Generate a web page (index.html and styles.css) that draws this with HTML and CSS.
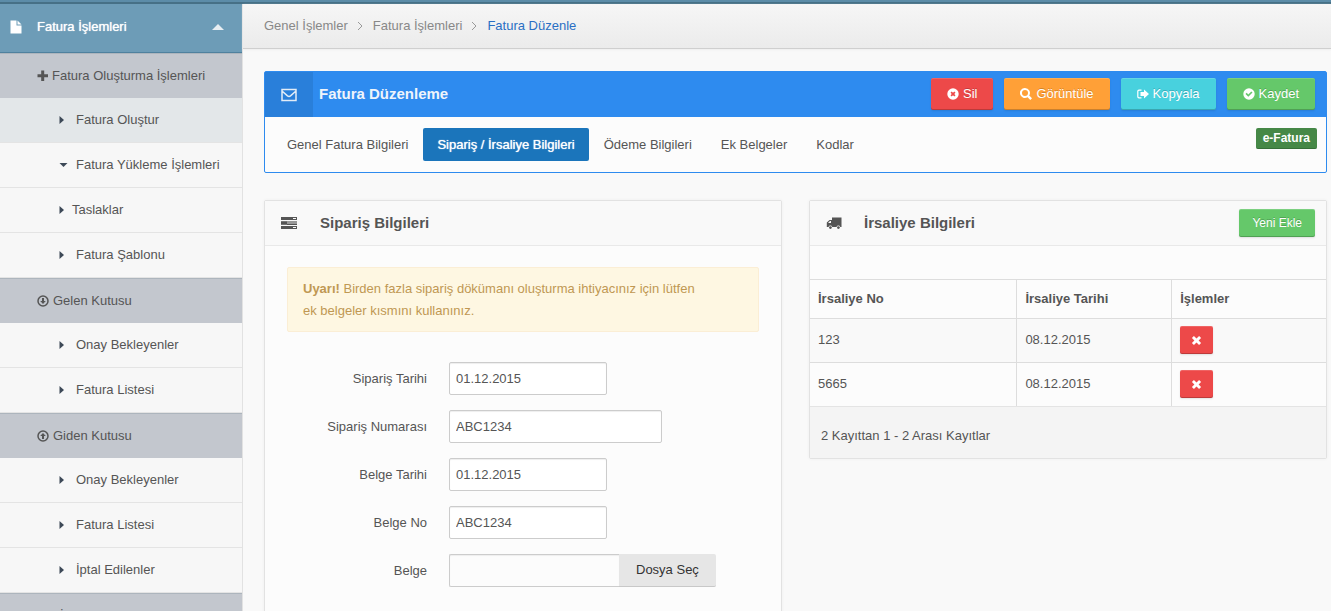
FILE: index.html
```html
<!DOCTYPE html>
<html lang="tr">
<head>
<meta charset="utf-8">
<title>Fatura Düzenle</title>
<link rel="stylesheet" href="styles.css">
</head>
<body>
<svg class="sprite" aria-hidden="true">
  <symbol id="right" viewBox="0 0 12 12"><path d="M1.500 2 6 6 1.500 10z"/></symbol>
  <symbol id="times" viewBox="0 0 12 12"><path d="M3.200 1 6 3.700 8.800 1 11 3.200 8.300 6 11 8.800 8.800 11 6 8.300 3.200 11 1 8.800 3.700 6 1 3.200z"/></symbol>
</svg>
<div class="topbar"></div>
<div class="layout">
  <nav class="sidebar">
    <a class="side-title" href="#">
      <svg class="icon" viewBox="0 0 12 14"><path d="M.5.5h6v5h5v8H.5z"/><path d="M7.500.5 11.500 4.500h-4z"/></svg>
      <span>Fatura İşlemleri</span>
      <svg class="caret" viewBox="0 0 12 6"><path d="M6 0 12 6H0z"/></svg>
    </a>
    <a class="side-head first" href="#"><svg class="icon" viewBox="0 0 12 12"><path d="M4.200.5h3v3.700H11v3H7.200V11h-3V7.200H.5v-3h3.700z"/></svg>Fatura Oluşturma İşlemleri</a>
    <a class="side-item current" href="#"><svg class="icon"><use href="#right"/></svg><span>Fatura Oluştur</span></a>
    <a class="side-item" href="#"><svg class="icon" viewBox="0 0 12 12"><path d="M1.500 4h8l-4 4z"/></svg><span>Fatura Yükleme İşlemleri</span></a>
    <a class="side-item tight" href="#"><svg class="icon"><use href="#right"/></svg><span>Taslaklar</span></a>
    <a class="side-item" href="#"><svg class="icon"><use href="#right"/></svg><span>Fatura Şablonu</span></a>
    <a class="side-head" href="#"><svg class="icon" viewBox="0 0 12 12"><circle class="ring" cx="6" cy="6" r="5"/><path d="M5 3h2v3h1.800L6 9 3.200 6H5z"/></svg>Gelen Kutusu</a>
    <a class="side-item" href="#"><svg class="icon"><use href="#right"/></svg><span>Onay Bekleyenler</span></a>
    <a class="side-item" href="#"><svg class="icon"><use href="#right"/></svg><span>Fatura Listesi</span></a>
    <a class="side-head" href="#"><svg class="icon" viewBox="0 0 12 12"><circle class="ring" cx="6" cy="6" r="5"/><path d="M5 9h2V6h1.800L6 3 3.200 6H5z"/></svg>Giden Kutusu</a>
    <a class="side-item" href="#"><svg class="icon"><use href="#right"/></svg><span>Onay Bekleyenler</span></a>
    <a class="side-item" href="#"><svg class="icon"><use href="#right"/></svg><span>Fatura Listesi</span></a>
    <a class="side-item" href="#"><svg class="icon"><use href="#right"/></svg><span>İptal Edilenler</span></a>
    <a class="side-head last" href="#"><svg class="icon" viewBox="0 0 12 12"><path d="M3 1h7v10H3z"/></svg>İade</a>
  </nav>
  <div class="content">
    <ol class="breadcrumb">
      <li><a href="#">Genel İşlemler</a></li>
      <li><svg viewBox="0 0 9 10"><path d="M2 1l4 4-4 4"/></svg><a href="#">Fatura İşlemleri</a></li>
      <li class="active"><svg viewBox="0 0 9 10"><path d="M2 1l4 4-4 4"/></svg><a href="#">Fatura Düzenle</a></li>
    </ol>
    <main>
      <section class="editor">
        <header class="editor-head">
          <span class="editor-icon"><svg viewBox="0 0 16 14"><path d="M1 1.500h14v11H1zM1 3l5.500 4.800q1.500 1.200 3 0L15 3"/></svg></span>
          <h1>Fatura Düzenleme</h1>
          <div class="actions">
            <button class="btn red"><svg class="icon" viewBox="0 0 12 12"><path fill-rule="evenodd" d="M6 .3a5.700 5.700 0 1 0 0 11.400A5.700 5.700 0 0 0 6 .3zM3.500 4.700 4.700 3.500 6 4.800l1.300-1.300 1.200 1.200L7.200 6l1.300 1.300-1.200 1.200L6 7.200 4.700 8.500 3.500 7.300 4.800 6z"/></svg>Sil</button>
            <button class="btn orange"><svg class="icon" viewBox="0 0 12 12"><path fill-rule="evenodd" d="M5 0a5 5 0 1 0 2.600 9.200L10.300 12 12 10.300 9.200 7.600A5 5 0 0 0 5 0zm0 2a3 3 0 1 1 0 6 3 3 0 0 1 0-6z"/></svg>Görüntüle</button>
            <button class="btn cyan"><svg class="icon" viewBox="0 0 12 12"><path d="M4.500 1.500v1.200H2.200q-.8 0-.8.8v5q0 .8.8.8h2.300v1.200H2Q.2 10.500.2 8.700V3.300Q.2 1.500 2 1.500zM7 1.500 12 6l-5 4.500V8H3.500V4H7z"/></svg>Kopyala</button>
            <button class="btn green"><svg class="icon" viewBox="0 0 12 12"><path fill-rule="evenodd" d="M6 .3a5.700 5.700 0 1 0 0 11.400A5.700 5.700 0 0 0 6 .3zM2.500 6l1.200-1.200 1.600 1.600 3-3 1.200 1.200-4.200 4.200z"/></svg>Kaydet</button>
          </div>
        </header>
        <div class="editor-body">
          <div class="tabs">
            <button class="tab">Genel Fatura Bilgileri</button>
            <button class="tab selected">Sipariş / İrsaliye Bilgileri</button>
            <button class="tab">Ödeme Bilgileri</button>
            <button class="tab">Ek Belgeler</button>
            <button class="tab">Kodlar</button>
          </div>
          <span class="badge">e-Fatura</span>
        </div>
      </section>
      <div class="columns">
        <section class="panel">
          <header class="panel-head">
            <svg viewBox="0 0 16 14"><path class="pale" d="M0 5h16v4H0z"/><path fill-rule="evenodd" d="M0 1h16v3H0zM12 2v1h3V2zM0 10h16v3H0zM12 11v1h3v-1zM0 5.500h6v3H0zM6 8h10v1H6z"/></svg>
            <h2>Sipariş Bilgileri</h2>
          </header>
          <div class="panel-body">
            <p class="alert"><strong>Uyarı!</strong> Birden fazla sipariş dökümanı oluşturma ihtiyacınız için lütfen ek belgeler kısmını kullanınız.</p>
            <form class="form">
              <div class="row"><label for="f1">Sipariş Tarihi</label><input id="f1" type="text" value="01.12.2015"></div>
              <div class="row"><label for="f2">Sipariş Numarası</label><input id="f2" class="wide" type="text" value="ABC1234"></div>
              <div class="row"><label for="f3">Belge Tarihi</label><input id="f3" type="text" value="01.12.2015"></div>
              <div class="row"><label for="f4">Belge No</label><input id="f4" type="text" value="ABC1234"></div>
              <div class="row"><label for="f5">Belge</label><div class="file"><input id="f5" type="text" readonly><button type="button">Dosya Seç</button></div></div>
            </form>
          </div>
        </section>
        <section class="panel">
          <header class="panel-head">
            <svg class="truck" viewBox="0 0 16 14"><path fill-rule="evenodd" d="M6 1.500h9.500V11h-1.200a2 2 0 0 0-3.800 0H6.300a2 2 0 0 0-3.800 0H.8V6.500L3.500 4H6zM2 7h3V5H4z"/><circle cx="4.400" cy="11.600" r="1.400"/><circle cx="12.400" cy="11.600" r="1.400"/></svg>
            <h2>İrsaliye Bilgileri</h2>
            <button class="btn green small">Yeni Ekle</button>
          </header>
          <table>
            <colgroup><col class="c1"><col class="c2"><col></colgroup>
            <thead><tr><th>İrsaliye No</th><th>İrsaliye Tarihi</th><th>İşlemler</th></tr></thead>
            <tbody>
              <tr><td>123</td><td>08.12.2015</td><td><button class="btn red small only" aria-label="Sil"><svg class="icon"><use href="#times"/></svg></button></td></tr>
              <tr><td>5665</td><td>08.12.2015</td><td><button class="btn red small only" aria-label="Sil"><svg class="icon"><use href="#times"/></svg></button></td></tr>
            </tbody>
          </table>
          <footer>2 Kayıttan 1 - 2 Arası Kayıtlar</footer>
        </section>
      </div>
    </main>
  </div>
</div>
</body>
</html>
```
FILE: styles.css
```css
* { box-sizing: border-box; }
body {
  margin: 0;
  height: 100vh;
  overflow: hidden;
  background: #f9f9f9;
  color: #555;
  font: 13px/22px "Liberation Sans", Arial, sans-serif;
}
a { color: inherit; text-decoration: none; }
button, input { font: inherit; color: inherit; }
h1, h2, p, ol { margin: 0; padding: 0; }
h1, h2 { font-size: 15px; font-weight: bold; }
.sprite { display: none; }
.icon { width: 12px; height: 12px; fill: currentColor; flex: none; }
.topbar { height: 4px; background: #5c8ca8; border-bottom: 2px solid #467086; }
.layout { display: flex; align-items: flex-start; }

.sidebar { width: 243px; flex: none; border-right: 1px solid #e2e2e2; background: #f7f7f7; }
.side-title {
  display: flex;
  align-items: center;
  height: 49px;
  padding: 0 18px 2px 10px;
  background: #6d9cb7;
  border-bottom: 1px solid #4f819e;
  color: #fff;
  text-shadow: 0 0 1px #fff;
}
.side-title .icon { height: 14px; margin-right: 15px; }
.side-title .caret { width: 12px; height: 6px; margin-left: auto; fill: #e8eef2; }
.side-head {
  display: flex;
  align-items: center;
  gap: 4px;
  height: 45px;
  padding-left: 37px;
  background: #c3c7ce;
  border-top: 1px solid #adb5bd;
}
.side-head.first { gap: 3px; }
.side-head.last { gap: 11px; }
.ring { fill: none; stroke: currentColor; stroke-width: 1.5; }
.side-item {
  display: flex;
  align-items: center;
  height: 45px;
  padding: 0 0 1px 58px;
  border-bottom: 1px solid #e4e4e4;
}
.side-item .icon { margin-right: 6px; color: #3d4957; }
.side-item.tight .icon { margin-right: 2px; }
.side-item.current { background: #e3e7e9; }

.content { flex: 1; min-width: 0; }
.breadcrumb {
  display: flex;
  align-items: center;
  height: 45px;
  padding-left: 21px;
  list-style: none;
  color: #888;
  background: linear-gradient(#f6f6f6, #ebebeb);
  border-bottom: 1px solid #cfcfcf;
  box-shadow: 0 1px 2px #eee;
}
.breadcrumb svg { width: 9px; height: 10px; margin: 0 8px; fill: none; stroke: #999; stroke-width: 1; vertical-align: -1px; }
.breadcrumb .active { color: #2a6fc4; }
main { padding: 22px 4px 0 21px; }

.editor { border: 1px solid #2e8bef; border-radius: 2px; background: #fcfcfc; }
.editor-head { display: flex; align-items: center; height: 45px; background: #2e8bef; color: #eef4fb; }
.editor-head h1, .actions { margin-bottom: 2px; }
.editor-icon { display: flex; align-items: center; justify-content: center; width: 48px; height: 45px; margin-right: 6px; background: #297fda; }
.editor-icon svg { width: 16px; height: 14px; fill: none; stroke: #e2ecf7; stroke-width: 1.5; }
.actions { display: flex; gap: 11px; margin-left: auto; padding-right: 11px; }
.btn {
  display: flex;
  align-items: center;
  gap: 4px;
  height: 32px;
  padding: 0 16px;
  border: 0;
  border-radius: 2px;
  color: #fff;
  text-shadow: 0 -1px 0 rgba(0, 0, 0, .2);
  box-shadow: inset 0 1px 0 rgba(255, 255, 255, .15), inset 0 -1px 0 rgba(0, 0, 0, .2), 0 1px 2px rgba(0, 0, 0, .1);
}
.red { background: #ed4949; }
.orange { background: #ffa037; }
.cyan { background: #48d1de; }
.green { background: #65c86a; }
.small { height: 28px; padding: 0 13px; font-size: 12px; }
.only { padding: 0 11px; }
.only .icon { width: 11px; height: 11px; }
.editor-body { display: flex; align-items: flex-start; padding: 11px 9px 11px 8px; }
.tabs { display: flex; flex: 1; gap: 1px; }
.tab { height: 33px; padding: 0 14px; border: 0; border-radius: 2px; background: none; }
.tab.selected { background: #1b75bb; color: #fff; text-shadow: 0 0 1px #fff; }
.badge {
  padding: 0 7px;
  line-height: 20px;
  border-radius: 2px;
  border-bottom: 1px solid #366f38;
  background: #468847;
  color: #fff;
  font-size: 12px;
  font-weight: bold;
}

.columns { display: grid; grid-template-columns: 1fr 1fr; gap: 27px; align-items: start; margin-top: 27px; }
.panel { border: 1px solid #e2e2e2; border-radius: 2px; background: #fcfcfc; box-shadow: 0 0 3px #eee; }
.panel-head { display: flex; align-items: center; height: 45px; padding: 0 11px 1px 16px; border-bottom: 1px solid #e9e9e9; background: #f9f9f9; }
.panel-head svg { width: 16px; height: 14px; margin-right: 23px; fill: #555; }
.panel-head .truck { margin-right: 22px; }
.panel-head .pale { fill: #999; }
.panel-head .btn { margin-left: auto; }
.panel-body { padding: 21px 22px 60px; }
.alert { padding: 10px 48px 9px 15px; border: 1px solid #fbeed5; border-radius: 2px; background: #fef7e2; color: #c09853; }
.form { display: grid; gap: 15px; margin-top: 30px; }
.row { display: flex; align-items: center; gap: 22px; }
.row label { width: 140px; text-align: right; }
.row input { width: 158px; height: 33px; padding: 0 6px; border: 1px solid #ccc; border-radius: 2px; background: #fff; outline: 0; box-shadow: inset 0 1px 1px #eee; }
.row .wide { width: 213px; }
.file { display: flex; }
.row .file input { width: 170px; border-right: 0; border-radius: 2px 0 0 2px; background: #fcfcfc; }
.file button { height: 33px; padding: 0 17px; border: 0; border-bottom: 1px solid #c8c8c8; border-radius: 0 2px 2px 0; background: #e6e6e6; color: #333; }

table { width: 100%; margin-top: 33px; border-collapse: separate; border-spacing: 0; table-layout: fixed; }
.c1 { width: 40%; }
.c2 { width: 30%; }
th, td { padding: 0 8px; text-align: left; border: 1px solid #ddd; border-width: 1px 0 0 1px; }
th:first-child, td:first-child { border-left: 0; }
th { height: 39px; }
td { height: 44px; padding-bottom: 1px; }
tbody tr:nth-child(odd) { background: #f9f9f9; }
footer { padding: 18px 11px 11px; border-top: 1px solid #e4e4e4; background: #f4f4f4; }
```
